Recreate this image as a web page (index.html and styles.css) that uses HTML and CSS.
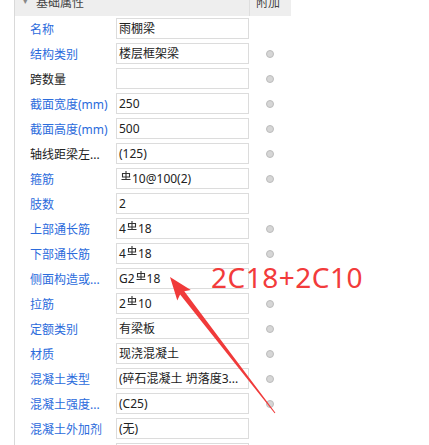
FILE: index.html
```html
<!DOCTYPE html>
<html lang="zh">
<head>
<meta charset="utf-8">
<link rel="stylesheet" href="styles.css">
</head>
<body>
<div class="panel">
  <div class="head">
    <div class="head-title"><span class="caret">▾</span><span class="head-text">基础属性</span></div>
    <div class="head-extra"><span class="head-text">附加</span></div>
  </div>
  <div class="row"><div class="label">名称</div><div class="val">雨棚梁</div><div class="dot-cell"></div></div>
  <div class="row"><div class="label">结构类别</div><div class="val">楼层框架梁</div><div class="dot-cell"><span class="dot"></span></div></div>
  <div class="row"><div class="label black">跨数量</div><div class="val"></div><div class="dot-cell"><span class="dot"></span></div></div>
  <div class="row"><div class="label">截面宽度(mm)</div><div class="val">250</div><div class="dot-cell"><span class="dot"></span></div></div>
  <div class="row"><div class="label">截面高度(mm)</div><div class="val">500</div><div class="dot-cell"><span class="dot"></span></div></div>
  <div class="row"><div class="label black">轴线距梁左...</div><div class="val">(125)</div><div class="dot-cell"><span class="dot"></span></div></div>
  <div class="row"><div class="label">箍筋</div><div class="val"><svg class="rb lead" viewBox="0 0 10 10"><path d="M5 0V8M1.5 2.5H8.5V6H1.5ZM0.5 8.5H9.5"/></svg>10@100(2)</div><div class="dot-cell"><span class="dot"></span></div></div>
  <div class="row"><div class="label">肢数</div><div class="val">2</div><div class="dot-cell"></div></div>
  <div class="row"><div class="label">上部通长筋</div><div class="val">4<svg class="rb" viewBox="0 0 10 10"><path d="M5 0V8M1.5 2.5H8.5V6H1.5ZM0.5 8.5H9.5"/></svg>18</div><div class="dot-cell"><span class="dot"></span></div></div>
  <div class="row"><div class="label">下部通长筋</div><div class="val">4<svg class="rb" viewBox="0 0 10 10"><path d="M5 0V8M1.5 2.5H8.5V6H1.5ZM0.5 8.5H9.5"/></svg>18</div><div class="dot-cell"><span class="dot"></span></div></div>
  <div class="row"><div class="label">侧面构造或...</div><div class="val">G2<svg class="rb" viewBox="0 0 10 10"><path d="M5 0V8M1.5 2.5H8.5V6H1.5ZM0.5 8.5H9.5"/></svg>18</div><div class="dot-cell"></div></div>
  <div class="row"><div class="label">拉筋</div><div class="val">2<svg class="rb" viewBox="0 0 10 10"><path d="M5 0V8M1.5 2.5H8.5V6H1.5ZM0.5 8.5H9.5"/></svg>10</div><div class="dot-cell"><span class="dot"></span></div></div>
  <div class="row"><div class="label">定额类别</div><div class="val">有梁板</div><div class="dot-cell"><span class="dot"></span></div></div>
  <div class="row"><div class="label">材质</div><div class="val">现浇混凝土</div><div class="dot-cell"><span class="dot"></span></div></div>
  <div class="row"><div class="label">混凝土类型</div><div class="val">(碎石混凝土 坍落度3...</div><div class="dot-cell"><span class="dot"></span></div></div>
  <div class="row"><div class="label">混凝土强度...</div><div class="val">(C25)</div><div class="dot-cell"><span class="dot"></span></div></div>
  <div class="row"><div class="label">混凝土外加剂</div><div class="val">(无)</div><div class="dot-cell"></div></div>
  <div class="row"><div class="label">泵送类型</div><div class="val">(混凝土泵)</div><div class="dot-cell"></div></div>
</div>
<div class="note">2C18+2C10</div>
<svg class="arrow" viewBox="0 0 429 445" width="429" height="445">
  <polygon points="170,277 190.8,290 184.3,291.2 275.4,412.7 274.6,413.3 180.1,294.5 177.3,300.4"/>
</svg>
</body>
</html>
```

FILE: styles.css
```css
html, body {
  margin: 0;
  padding: 0;
}
body {
  width: 429px;
  height: 445px;
  overflow: hidden;
  background: #ffffff;
  position: relative;
  font-family: "Noto Sans", "Noto Sans CJK SC", sans-serif;
  font-size: 12px;
  color: #222;
}
.panel {
  margin-left: 14px;
  width: 276px;
  height: 445px;
  border-left: 1px solid #d9d9d9;
  overflow: hidden;
}
.head {
  display: flex;
  height: 16px;
  background: #eeeeee;
  overflow: hidden;
}
.head-title {
  width: 235px;
  display: flex;
  align-items: flex-start;
  padding-left: 8px;
  box-sizing: border-box;
  border-right: 1px solid #dedede;
}
.head-extra {
  flex: 1;
  padding-left: 6px;
}
.head-text {
  display: block;
  line-height: 17px;
  margin-top: -6px;
  color: #444;
  font-size: 12px;
}
.caret {
  display: block;
  line-height: 10px;
  margin-top: -4px;
  font-size: 9px;
  color: #888;
  width: 13px;
}
.row {
  display: flex;
  align-items: center;
  height: 25px;
}
.label {
  width: 101px;
  padding-left: 15px;
  box-sizing: border-box;
  color: #2b6bdc;
  white-space: nowrap;
  overflow: hidden;
}
.label.black {
  color: #222;
}
.val {
  width: 133px;
  height: 21px;
  box-sizing: border-box;
  border: 1px solid #dcdcdc;
  padding-left: 2px;
  line-height: 19px;
  white-space: nowrap;
  overflow: hidden;
  color: #222;
}
.rb {
  width: 10px;
  height: 10px;
  margin: 0 1px 0 1px;
  vertical-align: 2px;
  fill: none;
  stroke: #333;
  stroke-width: 1.1;
}
.rb.lead {
  margin-left: 2px;
}
.dot-cell {
  width: 41px;
  display: flex;
  justify-content: center;
  align-items: center;
}
.dot {
  width: 8px;
  height: 8px;
  box-sizing: border-box;
  border-radius: 50%;
  background: #d6d6d6;
  border: 1px solid #bcbcbc;
}
.note {
  position: absolute;
  left: 211px;
  top: 263px;
  font-family: "Noto Sans", sans-serif;
  font-size: 28px;
  line-height: 28px;
  letter-spacing: 0.5px;
  color: #f23b3b;
  white-space: nowrap;
}
.arrow {
  position: absolute;
  left: 0;
  top: 0;
  fill: #f03a3a;
}
```
